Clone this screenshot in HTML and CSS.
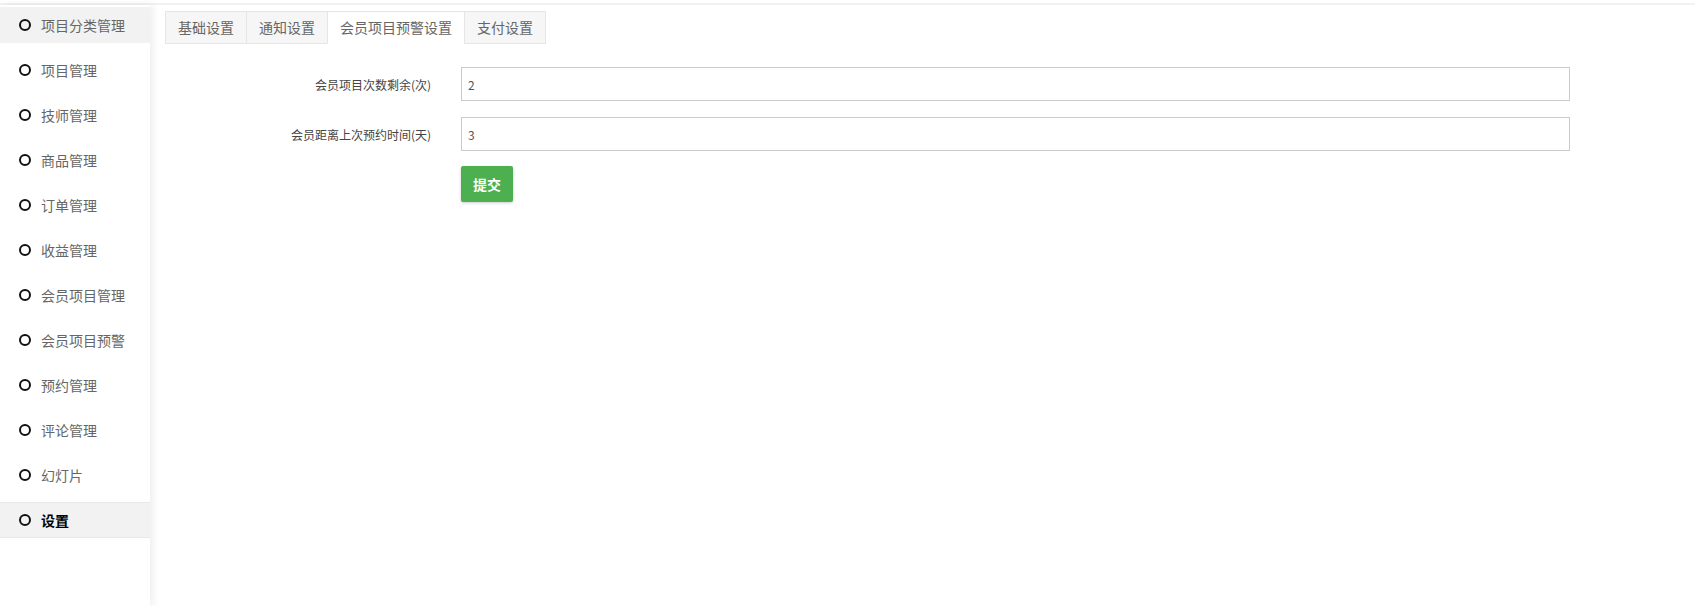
FILE: index.html
```html
<!DOCTYPE html>
<html lang="zh-CN">
<head>
    <meta charset="UTF-8" />
    <title>设置</title>
    <link rel="stylesheet" href="styles.css">
</head>
<body>
    <div class="topline"></div>
    <div class="layout">
        <div class="sidebar">
            <ul class="menu">
                <li class="menu-item hover"><span class="dot"></span>项目分类管理</li>
                <li class="menu-item"><span class="dot"></span>项目管理</li>
                <li class="menu-item"><span class="dot"></span>技师管理</li>
                <li class="menu-item"><span class="dot"></span>商品管理</li>
                <li class="menu-item"><span class="dot"></span>订单管理</li>
                <li class="menu-item"><span class="dot"></span>收益管理</li>
                <li class="menu-item"><span class="dot"></span>会员项目管理</li>
                <li class="menu-item"><span class="dot"></span>会员项目预警</li>
                <li class="menu-item"><span class="dot"></span>预约管理</li>
                <li class="menu-item"><span class="dot"></span>评论管理</li>
                <li class="menu-item"><span class="dot"></span>幻灯片</li>
                <li class="menu-item active"><span class="dot"></span>设置</li>
            </ul>
        </div>

        <div class="main">
            <div class="tabs">
                <div class="tab">基础设置</div>
                <div class="tab">通知设置</div>
                <div class="tab active">会员项目预警设置</div>
                <div class="tab">支付设置</div>
            </div>

            <form class="form">
                <div class="form-row">
                    <label class="form-label">会员项目次数剩余(次)</label>
                    <input class="form-input" type="text" value="2">
                </div>
                <div class="form-row">
                    <label class="form-label">会员距离上次预约时间(天)</label>
                    <input class="form-input" type="text" value="3">
                </div>
                <div class="form-actions">
                    <button class="btn-submit" type="button">提交</button>
                </div>
            </form>
        </div>
    </div>
</body>
</html>
```

FILE: styles.css
```css
* {
    margin: 0;
    padding: 0;
    box-sizing: border-box;
}

body {
    font-family: "Noto Sans CJK SC", "Liberation Sans", sans-serif;
    background: #fff;
    color: #333;
    height: 100vh;
    overflow: hidden;
    padding-top: 3px;
}

.topline {
    height: 2px;
    background: #f2f2f2;
}

.layout {
    display: flex;
    height: calc(100vh - 5px);
}

.sidebar {
    width: 150px;
    flex-shrink: 0;
    background: #fff;
    box-shadow: 3px 0 8px rgba(0, 0, 0, 0.07);
    position: relative;
    z-index: 1;
    padding-top: 2px;
}

.menu {
    list-style: none;
}

.menu-item {
    height: 36px;
    margin-bottom: 9px;
    display: flex;
    align-items: center;
    padding-left: 19px;
    font-size: 14px;
    color: #666;
    cursor: pointer;
}

.menu-item.hover {
    background: #f2f2f2;
}

.menu-item.active {
    background: #f2f2f2;
    border-top: 1px solid #e8e8e8;
    border-bottom: 1px solid #e8e8e8;
    color: #000;
    font-weight: bold;
}

.dot {
    width: 12px;
    height: 12px;
    border: 2px solid #111;
    border-radius: 50%;
    margin-right: 10px;
    flex-shrink: 0;
}

.main {
    flex: 1;
    padding: 6px 15px 0 15px;
}

.tabs {
    display: flex;
}

.tab {
    height: 33px;
    line-height: 31px;
    padding: 0 12px;
    font-size: 14px;
    color: #666;
    background: #f6f6f6;
    border: 1px solid #e6e6e6;
    margin-left: -1px;
}

.tab:first-child {
    margin-left: 0;
}

.tab.active {
    background: #fff;
    border-bottom-color: #fff;
}

.form {
    margin-top: 23px;
}

.form-row {
    display: flex;
    align-items: center;
    margin-bottom: 16px;
}

.form-row + .form-row {
    margin-bottom: 15px;
}

.form-label {
    width: 296px;
    flex-shrink: 0;
    padding-right: 30px;
    text-align: right;
    font-size: 12px;
    font-weight: normal;
    color: #444;
}

.form-input {
    width: 1109px;
    height: 34px;
    border: 1px solid #cbcbcb;
    padding: 0 6px;
    font-family: inherit;
    font-size: 12px;
    color: #555;
    outline: none;
}

.form-actions {
    padding-left: 296px;
}

.btn-submit {
    height: 36px;
    padding: 0 12px;
    border: none;
    border-radius: 2px;
    background: #4caf50;
    color: #fff;
    font-family: inherit;
    font-size: 14px;
    font-weight: bold;
    box-shadow: 0 1px 3px rgba(0, 0, 0, 0.2);
    cursor: pointer;
}
```
